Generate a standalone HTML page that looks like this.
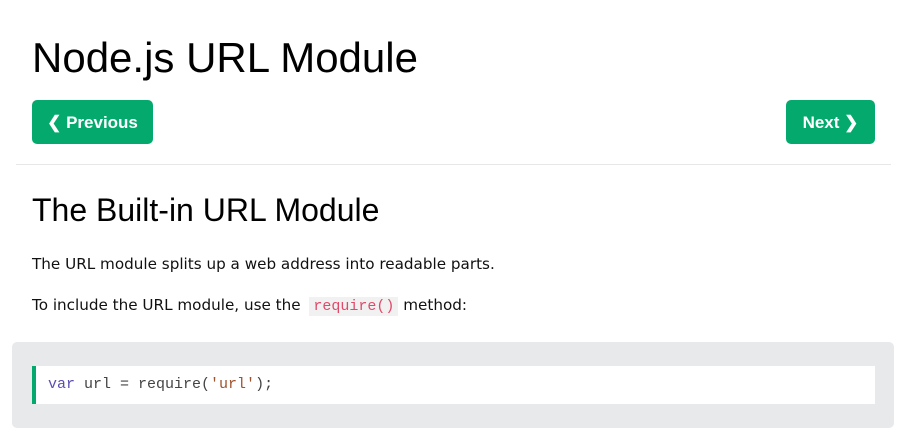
<!DOCTYPE html>
<html><head><meta charset="utf-8"><style>
body{margin:0;background:#fff;width:908px;height:446px;overflow:hidden;font-family:"DejaVu Sans",Verdana,sans-serif;color:#000}
h1{position:absolute;left:32px;top:32px;margin:0;font:42px "Liberation Sans",Arial,sans-serif;line-height:52px}
.btn{position:absolute;top:100px;height:44px;background:#04aa6d;color:#fff;border-radius:5px;font:bold 17px "Liberation Sans",sans-serif;line-height:46px;text-align:center}
hr{position:absolute;left:16px;top:164px;width:875px;margin:0;border:0;border-top:1px solid #e7e7e7}
h2{position:absolute;left:32px;top:190px;margin:0;font:32px "Liberation Sans",Arial,sans-serif;line-height:40px}
p{position:absolute;left:32px;margin:0;font-size:15.2px;line-height:22px;color:#111}
code{font:15px "Liberation Mono",monospace;color:#e04a6a;background:#f1f1f1;padding:1px 4px;margin-left:4px}
.ex{position:absolute;left:12px;top:342px;width:882px;height:86px;background:#e7e9eb;border-radius:5px}
.cd{position:absolute;left:20px;top:24px;height:38px;background:#fff;border-left:4px solid #04aa6d;font:15px "Liberation Mono",monospace;line-height:38px;padding-left:12px;box-sizing:border-box;width:843px;color:#444}
</style></head><body>
<h1>Node.js URL Module</h1>
<div class="btn" style="left:32px;width:121px">❮ Previous</div>
<div class="btn" style="left:786px;width:89px">Next ❯</div>
<hr>
<h2>The Built-in URL Module</h2>
<p style="top:253px">The URL module splits up a web address into readable parts.</p>
<p style="top:294px">To include the URL module, use the <code>require()</code> method:</p>
<div class="ex"><div class="cd"><span style="color:#5a4fb0">var</span> url = require(<span style="color:#a0522d">'url'</span>);</div></div>
</body></html>
